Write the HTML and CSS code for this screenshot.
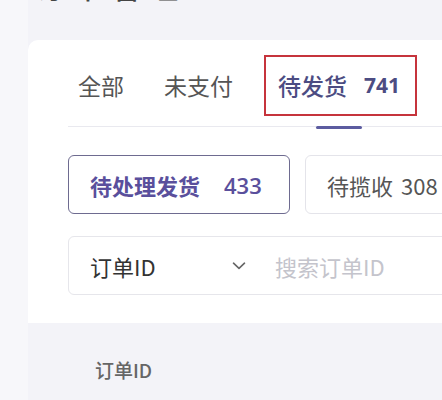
FILE: index.html
```html
<!DOCTYPE html>
<html lang="zh">
<head>
<meta charset="utf-8">
<link rel="stylesheet" href="styles.css">
</head>
<body>
<div class="page">
  <div class="title-wrap"><h1 class="title">订单管理</h1></div>
  <section class="card">
    <nav class="tabs">
      <span class="tab">全部</span>
      <span class="tab">未支付</span>
      <span class="tab active">待发货<b class="count">741</b></span>
    </nav>
    <div class="filters">
      <button class="chip selected">待处理发货<b class="count">433</b></button>
      <button class="chip">待揽收<span class="num">308</span></button>
    </div>
    <div class="search">
      <span class="select">订单ID</span>
      <svg class="chev" width="14" height="8" viewBox="0 0 14 8"><path d="M1.5 1.2 L7 6.4 L12.5 1.2" fill="none" stroke="#666" stroke-width="1.6" stroke-linecap="round" stroke-linejoin="round"/></svg>
      <span class="placeholder">搜索订单ID</span>
    </div>
  </section>
  <div class="table-head">订单ID</div>
</div>
</body>
</html>
```

FILE: styles.css
```css
html, body {
  margin: 0;
  padding: 0;
  background: #f3f3f8;
  overflow: hidden;
  width: 442px;
  height: 400px;
}
body {
  font-family: "Noto Sans CJK SC", "Noto Sans", sans-serif;
  color: #333;
}
.page {
  padding-left: 28px;
  background: linear-gradient(to right, #f7f7fa 0, #f7f7fa 28px, #f3f3f8 28px);
  min-height: 400px;
}
.title-wrap {
  height: 40px;
  overflow: hidden;
  position: relative;
}
.title {
  margin: 0;
  font-size: 28px;
  font-weight: 500;
  line-height: 40px;
  color: #444;
  position: relative;
  top: -33px;
  padding-left: 8px;
  letter-spacing: 10px;
}
.card {
  background: #fff;
  border-top-left-radius: 10px;
  padding: 0 0 28px 40px;
  width: 600px;
}
.tabs {
  display: flex;
  align-items: center;
  height: 86px;
  border-bottom: 1px solid #e9e9ef;
  position: relative;
}
.tab {
  font-size: 23px;
  color: #555;
  padding: 0 10px;
  margin-right: 20px;
  height: 61px;
  display: flex;
  align-items: center;
  position: relative;
  top: 2px;
}
.tab.active {
  color: #4c4c82;
  font-weight: 500;
  padding: 0 17px 0 14px;
  margin-left: 1px;
  outline: 2px solid #c6343c;
  outline-offset: -2px;
}
.tab.active::after {
  content: "";
  position: absolute;
  left: 50%;
  transform: translateX(-50%);
  margin-left: -2px;
  width: 46px;
  height: 3px;
  border-radius: 2px;
  background: #5c5ca0;
  bottom: -13px;
}
.count {
  font-family: "Open Sans", "Noto Sans", sans-serif;
  font-weight: 700;
  font-size: 21px;
  margin-left: 17px;
}
.filters {
  display: flex;
  gap: 15px;
  margin-top: 28px;
}
.chip {
  font-family: inherit;
  height: 59px;
  border: 1px solid #e4e4ea;
  border-radius: 6px;
  background: #fff;
  font-size: 22px;
  color: #555;
  padding: 0 21px;
  display: flex;
  align-items: center;
  width: 200px;
  white-space: nowrap;
}
.num {
  margin-left: 8px;
}
.chip.selected {
  width: 222px;
  border: 1.5px solid #6e6b90;
  color: #5a4f9c;
  font-weight: 600;
  font-size: 22px;
}
.chip.selected .count {
  margin-left: 24px;
  font-size: 22px;
  font-weight: 600;
}
.search {
  margin-top: 22px;
  height: 59px;
  border: 1px solid #e6e6eb;
  border-radius: 6px;
  display: flex;
  align-items: center;
  padding-left: 21px;
  box-sizing: border-box;
  width: 560px;
}
.select {
  font-size: 22px;
  color: #333;
  width: 142px;
}
.chev {
  margin-right: 29px;
}
.placeholder {
  font-size: 22px;
  color: #c4c4cc;
}
.table-head {
  padding: 33px 0 0 67px;
  font-size: 19px;
  color: #666;
  font-weight: 500;
}
```
